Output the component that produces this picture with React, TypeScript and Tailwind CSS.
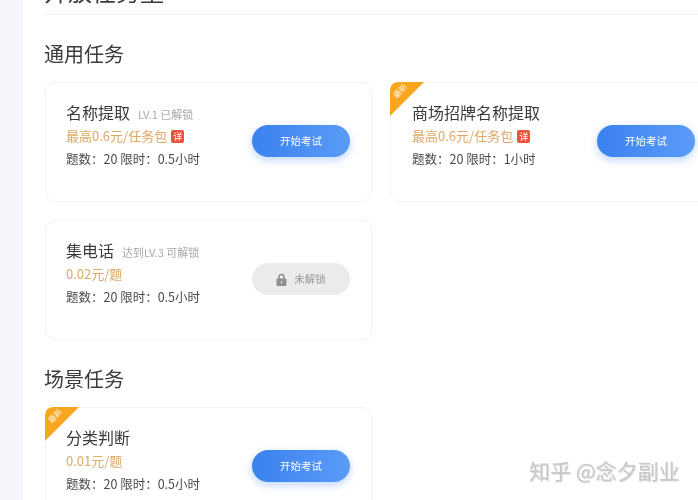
import React from "react";

const FONT = "font-['Noto_Sans_CJK_SC','Noto_Sans','Liberation_Sans',sans-serif]";

function Ribbon() {
  return (
    <div className="absolute left-[-1px] top-[-1px] h-[34px] w-[34px]">
      <svg width="34" height="34" viewBox="0 0 34 34" className="block">
        <path d="M0 34 L0 9 Q0 0 9 0 L34 0 Z" fill="#f9a61e" />
      </svg>
      <span className="absolute left-[2px] top-[4px] -rotate-45 text-[8px] leading-[10px] text-white/90">最新</span>
    </div>
  );
}

function StartButton() {
  return (
    <div className="flex h-8 w-[98px] shrink-0 items-center justify-center rounded-full bg-gradient-to-r from-[#3b82f0] to-[#5a9bf6] text-[10.5px] text-white shadow-[0_3px_8px_rgba(70,140,245,0.35)]">
      开始考试
    </div>
  );
}

function LockedButton() {
  return (
    <div className="flex h-8 w-[98px] shrink-0 items-center justify-center gap-[7px] rounded-full bg-[#ebebeb] text-[10.5px] text-[#9a9a9a]">
      <svg width="11" height="13" viewBox="0 0 11 13" className="block">
        <path d="M3 6V4a2.5 2.5 0 0 1 5 0v2" fill="none" stroke="#8f8f8f" strokeWidth="1.5" />
        <rect x="0.5" y="5.5" width="10" height="7.5" rx="1" fill="#8f8f8f" />
        <rect x="5" y="8" width="1" height="2.5" fill="#ebebeb" />
      </svg>
      未解锁
    </div>
  );
}

type CardProps = {
  title: string;
  note?: string;
  price: string;
  badge?: boolean;
  meta: string;
  ribbon?: boolean;
  locked?: boolean;
  wide?: boolean;
};

function Card({ title, note, price, badge, meta, ribbon, locked, wide }: CardProps) {
  return (
    <div className={`relative flex h-[120px] w-[327px] shrink-0 items-start justify-between rounded-[10px] border border-[#f3f3f5] bg-white pr-[21px] pt-[19px] ${wide ? "pl-[21px]" : "pl-[20px]"}`}>
      {ribbon && <Ribbon />}
      <div className="flex flex-col">
        <div className="flex h-[20px] items-baseline gap-2">
          <span className="text-[16px] leading-[20px] text-[#3a3a3a]">{title}</span>
          {note && <span className="text-[11px] leading-[20px] text-[#a8a8a8]">{note}</span>}
        </div>
        <div className="mt-[5px] flex h-[18px] items-center gap-1 text-[13px] leading-[18px] text-[#dfa864]">
          <span>{price}</span>
          {badge && (
            <span className="flex h-[13px] w-[13px] items-center justify-center rounded-[2px] bg-[#e8533c] text-[9px] leading-none text-white">详</span>
          )}
        </div>
        <div className="mt-[6px] text-[12.5px] leading-[16px] text-[#4a4a4a]">{meta}</div>
      </div>
      <div className="mt-[23px]">{locked ? <LockedButton /> : <StartButton />}</div>
    </div>
  );
}

export default function App() {
  return (
    <div className={`relative flex h-[500px] w-[698px] overflow-hidden bg-white blur-[0.35px] ${FONT}`}>
      <div className="w-[23px] shrink-0 bg-[#f5f6fc]" />
      <div className="min-w-0 flex-1 pl-[21px]">
        <div className="-mt-[21px] h-[36px] border-b border-[#efefef] text-[24px] leading-[24px] text-[#3a3a3a]">开放任务量</div>
        <h2 className="mt-[25px] text-[20px] font-normal leading-[28px] text-[#3a3a3a]">通用任务</h2>
        <div className="mt-[14px] flex w-[720px] gap-[18px] pl-px">
          <Card title="名称提取" note="LV.1 已解锁" price="最高0.6元/任务包" badge meta="题数：20 限时：0.5小时" />
          <Card title="商场招牌名称提取" price="最高0.6元/任务包" badge meta="题数：20 限时：1小时" ribbon wide />
        </div>
        <div className="mt-[18px] pl-px">
          <Card title="集电话" note="达到LV.3 可解锁" price="0.02元/题" meta="题数：20 限时：0.5小时" locked />
        </div>
        <h2 className="mt-[25px] text-[20px] font-normal leading-[28px] text-[#3a3a3a]">场景任务</h2>
        <div className="mt-[14px] pl-px">
          <Card title="分类判断" price="0.01元/题" meta="题数：20 限时：0.5小时" ribbon />
        </div>
      </div>
      <div className="absolute left-[529px] top-[456px] text-[21px] leading-[28px] text-[#c9c9c9] [text-shadow:1px_1px_0_rgba(120,120,120,0.25)]">知乎 @念夕副业</div>
    </div>
  );
}
